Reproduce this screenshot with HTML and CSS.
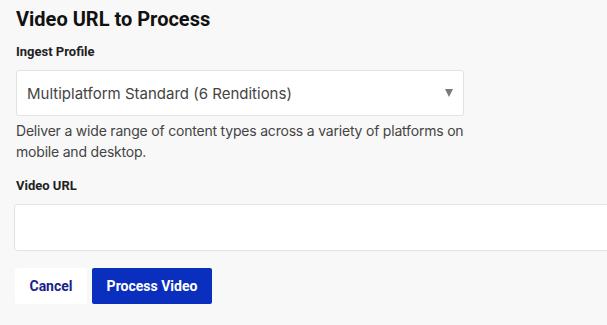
FILE: index.html
```html
<!DOCTYPE html>
<html>
<head>
<meta charset="utf-8">
<link rel="stylesheet" href="styles.css">
</head>
<body>
<div class="page">
  <h1 class="title">Video URL to Process</h1>
  <div class="field">
    <label class="label">Ingest Profile</label>
    <div class="select">
      <span class="select-text">Multiplatform Standard (6 Renditions)</span>
      <span class="arrow"></span>
    </div>
    <p class="help">Deliver a wide range of content types across a variety of platforms on mobile and desktop.</p>
  </div>
  <div class="field url">
    <label class="label">Video URL</label>
    <div class="input"></div>
  </div>
  <div class="actions">
    <button class="btn cancel">Cancel</button>
    <button class="btn primary">Process Video</button>
  </div>
</div>
</body>
</html>
```
FILE: styles.css
```css
html, body {
  margin: 0;
  padding: 0;
  background: #f8f8f8;
  overflow: hidden;
}
.page {
  font-family: "Roboto", "Liberation Sans", sans-serif;
  padding: 6px 0 0 16px;
  color: #111;
}
.title {
  margin: 0;
  font-size: 20px;
  font-weight: 700;
  line-height: 26px;
  color: #111;
}
.field {
  margin-top: 11px;
}
.label {
  display: block;
  font-size: 13px;
  font-weight: 700;
  line-height: 18px;
  color: #222;
}
.select {
  margin-top: 9px;
  width: 426px;
  height: 44px;
  background: #fff;
  border: 1px solid #e2e2e2;
  border-radius: 3px;
  display: flex;
  align-items: center;
  justify-content: space-between;
  padding: 0 10px;
}
.select-text {
  font-family: "Inter", "Roboto", sans-serif;
  font-size: 15px;
  color: #444;
}
.arrow {
  width: 0;
  height: 0;
  border-left: 4px solid transparent;
  border-right: 4px solid transparent;
  border-top: 8px solid #7a7a7a;
}
.help {
  font-family: "Inter", "Roboto", sans-serif;
  margin: 4px 0 0;
  width: 455px;
  font-size: 14px;
  letter-spacing: -0.2px;
  line-height: 21px;
  color: #444;
}
.url {
  margin-top: 15px;
}
.input {
  margin-top: 9px;
  margin-left: -2px;
  margin-right: -4px;
  height: 45px;
  background: #fff;
  border: 1px solid #e2e2e2;
  border-radius: 3px;
}
.actions {
  margin-top: 17px;
  margin-left: -1px;
  display: flex;
  gap: 5px;
}
.btn {
  font-family: inherit;
  font-size: 14px;
  font-weight: 700;
  height: 36px;
  border: none;
  border-radius: 2px;
  padding: 0 13px;
  cursor: pointer;
}
.cancel {
  background: #fff;
  color: #1b1f8a;
  width: 72px;
}
.primary {
  background: #0a2fbe;
  color: #fff;
  width: 120px;
}
```
